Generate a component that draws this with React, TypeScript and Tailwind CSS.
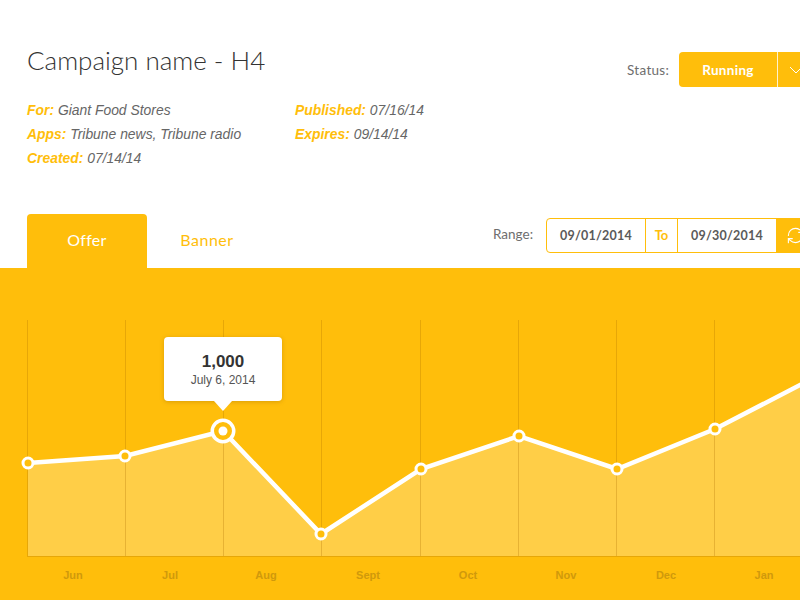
import { RefreshCw } from "lucide-react";

const pts: [number, number][] = [
  [28, 463],
  [125, 456],
  [223, 431],
  [321, 534],
  [421, 469],
  [519, 436],
  [617, 469],
  [715, 429],
  [802, 384],
];
const grid = [27.5, 125.5, 223.5, 321.5, 420.5, 518.5, 616.5, 714.5];
const months: [string, number][] = [
  ["Jun", 73],
  ["Jul", 170],
  ["Aug", 266],
  ["Sept", 368],
  ["Oct", 468],
  ["Nov", 566],
  ["Dec", 666],
  ["Jan", 764],
];
const line = pts.map((p) => p.join(",")).join(" ");

function Meta({ label, value }: { label: string; value: string }) {
  return (
    <div className="h-6 text-[13.9px] leading-6 italic">
      <span className="font-bold text-[#ffbe0b]">{label}</span> <span className="text-[#666]">{value}</span>
    </div>
  );
}

export default function App() {
  return (
    <div className="flex h-[600px] w-[800px] flex-col overflow-hidden bg-white font-['Liberation_Sans',sans-serif]">
      <header className="flex h-[214px] shrink-0 pl-[27px] pt-[42px]">
        <div className="w-[600px] shrink-0">
          <h1 className="h-[36px] font-['Lato',sans-serif] text-[26px] leading-[36px] font-light text-[#333]">
            Campaign name - H4
          </h1>
          <div className="mt-[20px] flex">
            <div className="w-[268px]">
              <Meta label="For:" value="Giant Food Stores" />
              <Meta label="Apps:" value="Tribune news, Tribune radio" />
              <Meta label="Created:" value="07/14/14" />
            </div>
            <div>
              <Meta label="Published:" value="07/16/14" />
              <Meta label="Expires:" value="09/14/14" />
            </div>
          </div>
        </div>
        <div className="mt-[10px] flex h-[35px] shrink-0 items-center font-['Lato',sans-serif]">
          <span className="w-[52px] pt-px text-[13.5px] tracking-[0.3px] text-[#6e6e6e]">Status:</span>
          <div className="flex h-[35px] w-[140px] shrink-0 items-center rounded-[4px] bg-[#ffbe0b] text-white">
            <span className="w-[98px] pt-[2px] text-center text-[13.5px] font-bold tracking-[0.3px]">Running</span>
            <span className="h-full w-px bg-white/80" />
            <svg width="14" height="8" viewBox="0 0 14 8" fill="none" stroke="white" strokeWidth="1" className="ml-[11px]">
              <path d="M1 1l6 6 6-6" />
            </svg>
          </div>
        </div>
      </header>

      <div className="flex h-[54px] shrink-0 pl-[27px] font-['Lato',sans-serif]">
        <div className="flex h-full w-[120px] shrink-0 items-center justify-center rounded-t-[4px] bg-[#ffbe0b] pb-[3px] text-[16px] tracking-[0.3px] text-white">
          Offer
        </div>
        <div className="flex h-full w-[120px] shrink-0 items-center justify-center pb-[3px] text-[16px] tracking-[0.5px] text-[#ffbe0b]">
          Banner
        </div>
        <div className="mt-[4px] ml-[226px] flex h-[35px] shrink-0 items-center self-start">
          <span className="w-[53px] pb-[3px] text-[13.5px] text-[#6e6e6e]">Range:</span>
          <div className="flex h-[35px] w-[270px] shrink-0 items-stretch rounded-[4px] border border-[#ffbe0b] text-[12.5px] font-bold text-[#5a5a5a]">
            <div className="flex w-[98px] shrink-0 items-center justify-center pt-px tracking-[0.25px]">09/01/2014</div>
            <div className="flex w-[33px] shrink-0 items-center justify-center border-x border-[#ffbe0b] pt-px text-[13px] text-[#ffbe0b]">To</div>
            <div className="flex w-[98px] shrink-0 items-center justify-center pt-px tracking-[0.25px]">09/30/2014</div>
            <div className="flex flex-1 items-center bg-[#ffbe0b] pl-[10px] text-white">
              <RefreshCw size={19} strokeWidth={1.4} />
            </div>
          </div>
        </div>
      </div>

      <section className="relative flex-1 bg-[#ffbe0b]">
        <svg viewBox="0 268 800 332" width="800" height="332" className="block">
          <polygon points={`28,556 ${line} 802,556`} fill="#ffce47" />
          {grid.map((x) => (
            <line key={x} x1={x} x2={x} y1="320" y2="556" stroke="#a86a00" strokeOpacity="0.28" />
          ))}
          <line x1="27" x2="800" y1="556.5" y2="556.5" stroke="#a86a00" strokeOpacity="0.28" />
          <polyline points={line} fill="none" stroke="#fff" strokeWidth="4.5" />
          {pts.slice(0, 8).map(([x, y]) =>
            x === 223 ? (
              <g key={x}>
                <circle cx={x} cy={y} r="10.75" fill="#ffbe0b" stroke="#fff" strokeWidth="3.5" />
                <circle cx={x} cy={y} r="4.5" fill="#fff" />
              </g>
            ) : (
              <circle key={x} cx={x} cy={y} r="5" fill="#ffbe0b" stroke="#fff" strokeWidth="3" />
            ),
          )}
          {months.map(([m, x]) => (
            <text key={m} x={x} y="579" textAnchor="middle" fontSize="11" fontWeight="700" fill="#d0990c">
              {m}
            </text>
          ))}
        </svg>
        <div className="absolute top-[69px] left-[164px] flex h-[64px] w-[118px] flex-col items-center justify-center rounded-[4px] bg-white shadow-[0_1px_4px_rgba(150,100,0,0.35)]">
          <div className="text-[17px] leading-[22px] font-bold text-[#333]">1,000</div>
          <div className="text-[12px] leading-[15px] text-[#555]">July 6, 2014</div>
          <div className="absolute top-full left-1/2 h-0 w-0 -translate-x-1/2 border-x-[9px] border-t-[10px] border-x-transparent border-t-white" />
        </div>
      </section>
    </div>
  );
}
